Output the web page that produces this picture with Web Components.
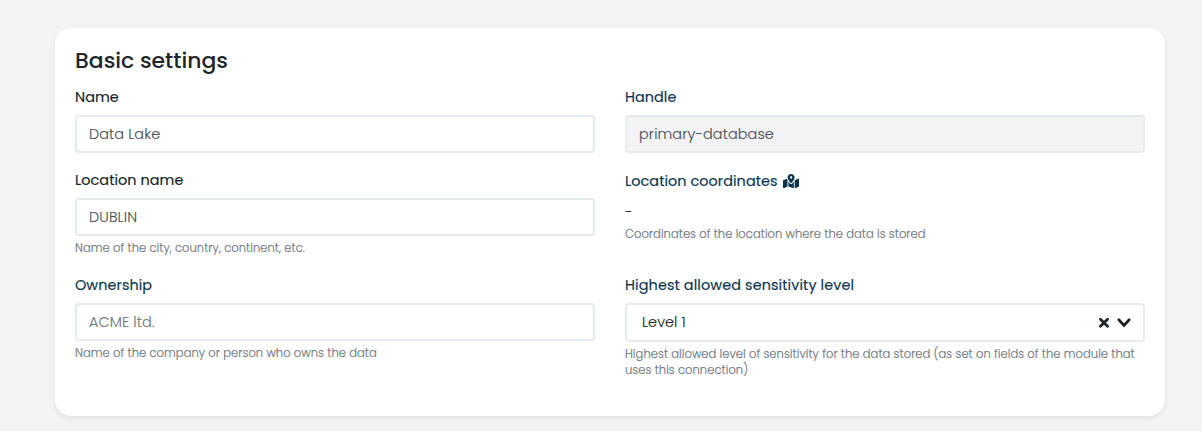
<!DOCTYPE html>
<html lang="en">
<head>
<meta charset="utf-8">
<title>Basic settings</title>
<style>
html,body{margin:0;height:100%;background:#f3f3f5}
body{font-family:Poppins,Inter,"Open Sans",sans-serif;overflow:hidden;color:#162425}
</style>
</head>
<body>
<settings-card>
  <span slot="title">Basic settings</span>
  <form-field>
    <span slot="label">Name</span>
    <text-box>Data Lake</text-box>
  </form-field>
  <form-field navy>
    <span slot="label">Handle</span>
    <text-box disabled>primary-database</text-box>
  </form-field>
  <form-field>
    <span slot="label">Location name</span>
    <text-box>DUBLIN</text-box>
    <span slot="help">Name of the city, country, continent, etc.</span>
  </form-field>
  <form-field navy plain>
    <span slot="label">Location coordinates</span>
    <map-icon slot="label"></map-icon>
    <plain-value>-</plain-value>
    <span slot="help">Coordinates of the location where the data is stored</span>
  </form-field>
  <form-field navy>
    <span slot="label">Ownership</span>
    <text-box placeholder>ACME ltd.</text-box>
    <span slot="help">Name of the company or person who owns the data</span>
  </form-field>
  <form-field navy>
    <span slot="label" style="letter-spacing:.11px">Highest allowed sensitivity level</span>
    <select-box>Level 1</select-box>
    <span slot="help">Highest allowed level of sensitivity for the data stored (as set on fields of the module that uses this connection)</span>
  </form-field>
</settings-card>
<script>
const define = (name, html) => customElements.define(name, class extends HTMLElement {
  constructor() {
    super();
    this.attachShadow({mode: 'open'}).innerHTML = html;
  }
});

define('settings-card', `<style>
:host{display:block;box-sizing:border-box;margin:28px 37px 0 55px;height:388px;padding:18px 20px;background:#fff;border-radius:16px;box-shadow:0 2px 4px rgba(0,0,0,.075)}
h5{margin:0 0 10px;font-size:21.9px;line-height:30px;font-weight:500;color:#212529}
.grid{display:grid;grid-template-columns:520px 520px;column-gap:30px;grid-template-rows:83px 105px auto}
</style><h5><slot name="title"></slot></h5><div class="grid"><slot></slot></div>`);

define('form-field', `<style>
:host{display:block;color:#162425}
:host([navy]){color:#0b344e}
.label{display:flex;align-items:center;gap:5px;height:22px;margin-bottom:7px;font-size:14.4px;line-height:22px;font-weight:400;letter-spacing:.06px;-webkit-text-stroke:.15px currentColor}
:host([plain]) .label{height:24px}
.help{margin-top:4px;font-size:11.52px;line-height:16px;font-weight:300;color:#6c757d;letter-spacing:.055px;-webkit-text-stroke:.15px currentColor}
:host([plain]) .help{margin-top:2px}
</style><div class="label"><slot name="label"></slot></div><slot></slot><div class="help"><slot name="help"></slot></div>`);

define('text-box', `<style>
:host{display:flex;align-items:center;box-sizing:border-box;height:38px;padding:0 12px;border:2px solid #e6ebf0;border-radius:4px;background:#fff;color:#495057;font-size:14.4px;line-height:22px;font-weight:300;letter-spacing:.11px;-webkit-text-stroke:.12px currentColor}
:host([disabled]){background:#f3f3f5}
:host([placeholder]){color:#6c757d}
</style><slot></slot>`);

define('select-box', `<style>
:host{display:flex;align-items:center;box-sizing:border-box;height:39px;padding:0 11px 0 15px;border:2px solid #e6ebf0;border-radius:4px;color:#212529;font-size:14.4px;line-height:22px;font-weight:300;letter-spacing:.06px;-webkit-text-stroke:.12px currentColor}
span{margin-top:-1px}
svg{display:block;fill:none;stroke:#212529;stroke-width:2.8;stroke-linecap:round}
.x{margin-left:auto;margin-right:6px}
</style><span><slot></slot></span>
<svg class="x" width="12" height="12" viewBox="0 0 12 12"><path d="M2.4 2.2 9.6 9.2M9.6 2.2 2.4 9.2"/></svg>
<svg width="16" height="12" viewBox="0 0 16 12"><path d="m2.8 2.800 5.2 5.6L13.200 2.800"/></svg>`);

define('plain-value', `<style>
:host{display:block;height:24px;font-size:14.4px;line-height:24px;font-weight:300;color:#212529}
</style><slot></slot>`);

define('map-icon', `<style>:host{display:block}svg{display:block}</style>
<svg width="16.200" height="14.400" viewBox="0 0 576 512" fill="#0b344e"><path d="M288 0c-69.590 0-126 56.410-126 126 0 56.260 82.350 158.800 113.900 196.020 6.390 7.540 17.820 7.540 24.200 0C331.650 284.800 414 182.260 414 126 414 56.410 357.590 0 288 0zm0 168c-23.200 0-42-18.800-42-42s18.800-42 42-42 42 18.800 42 42-18.800 42-42 42zM20.120 215.950A32.006 32.006 0 0 0 0 245.660v250.320c0 11.320 11.430 19.060 21.940 14.860L160 448V214.920c-8.840-15.980-16.070-31.540-21.250-46.420L20.120 215.950zM288 359.670c-14.070 0-27.380-6.180-36.510-16.960-19.660-23.200-40.570-49.620-59.490-76.720v182l192 64V266c-18.920 27.090-39.820 53.520-59.490 76.720-9.130 10.770-22.440 16.950-36.510 16.950zm266.060-198.510L416 224v288l139.880-55.950A31.996 31.996 0 0 0 576 426.340V176.020c0-11.320-11.430-19.060-21.940-14.860z"/></svg>`);
</script>
</body>
</html>
